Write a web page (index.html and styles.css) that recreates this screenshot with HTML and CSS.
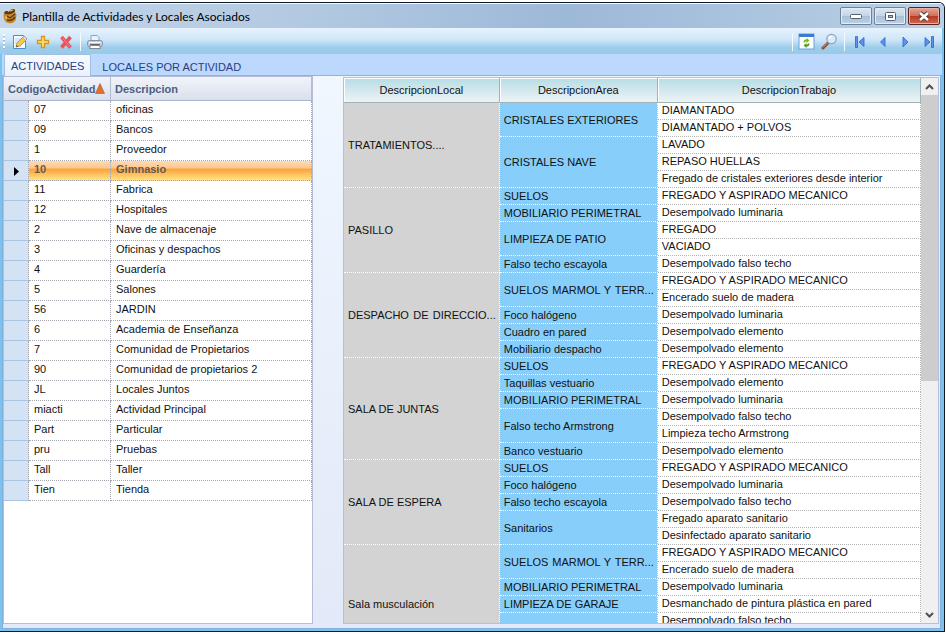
FILE: index.html
```html
<!DOCTYPE html>
<html lang="es">
<head>
<meta charset="utf-8">
<title>Plantilla de Actividades y Locales Asociados</title>
<link rel="stylesheet" href="styles.css">
</head>
<body>
<main class="window">
  <header class="titlebar">
    <svg class="app-icon" width="14" height="16" viewBox="0 0 14 16" aria-hidden="true">
      <path d="M1 5C0 9 1 14 5 15c4 1 8-1 8-5 1-3 0-5-1-6L8 6Z" fill="#c98427"/>
      <path d="M1 5C2 2 5 3 6 4 7 1 11 0 12 2c1 2-3 4-5 4S3 7 1 5Z" fill="#5b3a19"/>
      <path d="M4 8l3 2 5-4M4 12c3 1 6 0 8-3" stroke="#5f3b10" stroke-width="1.4" fill="none"/>
      <path d="M7 3l3-1M3 8v3" stroke="#ffd76b" fill="none"/>
    </svg>
    <h1 class="title">Plantilla de Actividades y Locales Asociados</h1>
    <div class="window-buttons">
      <button class="win-btn" aria-label="Minimizar"><svg width="12" height="5" viewBox="0 0 12 5"><rect x=".5" y=".5" width="11" height="4" rx="1" fill="#fff" stroke="#535f6d"/></svg></button>
      <button class="win-btn" aria-label="Maximizar"><svg width="11" height="9" viewBox="0 0 11 9"><rect x=".5" y=".5" width="10" height="8" rx="1" fill="#fff" stroke="#535f6d"/><rect x="3.500" y="3.500" width="4" height="2" fill="#a9bdd2" stroke="#535f6d"/></svg></button>
      <button class="win-btn close" aria-label="Cerrar"><svg width="14" height="11" viewBox="0 0 14 11"><path d="M3 2l8 7M11 2L3 9" stroke="#53393c" stroke-width="4.500"/><path d="M3 2l8 7M11 2L3 9" stroke="#fff" stroke-width="2.600"/></svg></button>
    </div>
  </header>

  <div class="toolbar">
    <span class="grip"></span>
    <button class="tool" aria-label="Editar"><svg width="16" height="16" viewBox="0 0 16 16"><path d="M1.500 1.500h10l2 2v11h-12Z" fill="#f4fbff" stroke="#4c8fce"/><path d="M3 5h7M3 7h6M3 9h4" stroke="#b5d5ee"/><path d="M4 13l1-4 7-7 3 3-7 7Z" fill="#f7c950" stroke="#bd8429" stroke-width=".8"/><path d="M12 2l3 3-1.500 1.500-3-3Z" fill="#d8e3f0" stroke="#88a" stroke-width=".6"/><path d="M4 13l.6-2 1.500 1.500Z" fill="#444"/></svg></button>
    <button class="tool" aria-label="Añadir"><svg width="16" height="16" viewBox="0 0 16 16"><path d="M6.500 2.500h3v4h4v3h-4v4h-3v-4h-4v-3h4Z" fill="#ffe07a" stroke="#d5961b" stroke-width="1.300"/></svg></button>
    <button class="tool" aria-label="Eliminar"><svg width="16" height="16" viewBox="0 0 16 16"><path d="M3.500 3l9 10.500M12.500 3l-9 10.500" stroke="#e9545a" stroke-width="3.600"/><path d="M4 3.500l8 9" stroke="#f68484" stroke-width="1"/></svg></button>
    <span class="separator"></span>
    <button class="tool" aria-label="Imprimir"><svg width="16" height="16" viewBox="0 0 16 16"><path d="M4 7V1.500h6l2 2V7" fill="#e7f3ff" stroke="#7aa7d8"/><rect x=".5" y="6.500" width="15" height="6" rx="2" fill="#c9ced6" stroke="#8a919c"/><path d="M2 8.500h12" stroke="#f5f6f8"/><path d="M3 10.500h10" stroke="#5e646e"/><path d="M3.500 11.500h9l1 3h-11Z" fill="#fff" stroke="#818895"/></svg></button>
    <span class="spring"></span>
    <span class="separator"></span>
    <button class="tool" aria-label="Actualizar"><svg width="17" height="17" viewBox="0 0 17 17"><rect x="1" y="1" width="15" height="15" fill="#fbfdff" stroke="#6fa0dc"/><path d="M1 1h15v3H1Z" fill="#3d7bd2"/><path d="M5.500 9.500C5.500 7 7 6.500 8.500 6.500V5l3 2.500-3 2.500V8.500C7.500 8.500 7 9 7 9.500Z" fill="#7cb82a"/><path d="M11.500 10.500c0 2.500-1.500 3-3 3V15l-3-2.500 3-2.500v1.500c1 0 1.500-.5 1.500-1Z" fill="#5a9c16"/></svg></button>
    <button class="tool" aria-label="Buscar"><svg width="17" height="17" viewBox="0 0 17 17"><path d="M7 10l-5 5" stroke="#8a4b33" stroke-width="3" stroke-linecap="round"/><path d="M6.500 10L2 14.500" stroke="#d99a73" stroke-width="1"/><circle cx="10.500" cy="6" r="4.700" fill="#d6ecfc" stroke="#8fa5bd" stroke-width="1.300"/><path d="M8 5.500q1-2 3-2" stroke="#fff" stroke-width="1.500" fill="none"/></svg></button>
    <span class="separator"></span>
    <button class="nav" aria-label="Primero"><svg width="12" height="12" viewBox="0 0 12 12"><path d="M1.500.5h2v11h-2ZM10 1.500v9L5 6Z" fill="#5f92ec" stroke="#2f62c8" stroke-width=".8"/></svg></button>
    <button class="nav" aria-label="Anterior"><svg width="12" height="12" viewBox="0 0 12 12"><path d="M8 1.500v9L3.500 6Z" fill="#5f92ec" stroke="#2f62c8" stroke-width=".8"/></svg></button>
    <button class="nav" aria-label="Siguiente"><svg width="12" height="12" viewBox="0 0 12 12"><path d="M3 1v10L8 6Z" fill="#5f92ec" stroke="#2f62c8" stroke-width=".8"/></svg></button>
    <button class="nav" aria-label="Último"><svg width="12" height="12" viewBox="0 0 12 12"><path d="M8.500.5h2v11h-2ZM2 1.500v9L7 6Z" fill="#5f92ec" stroke="#2f62c8" stroke-width=".8"/></svg></button>
  </div>

  <div class="tabs" role="tablist">
    <button class="tab active" role="tab" aria-selected="true">ACTIVIDADES</button>
    <button class="tab" role="tab" aria-selected="false">LOCALES POR ACTIVIDAD</button>
  </div>

  <section class="panel">
    <div class="activities">
      <table class="list">
        <colgroup><col class="c-mark"><col class="c-code"><col></colgroup>
        <thead><tr><th colspan="2"><span class="sorted">CodigoActividad<svg width="10" height="11" viewBox="0 0 10 11"><path d="M5 .5l4.500 10h-9Z" fill="#e2702a" stroke="#a9623c" stroke-width=".7"/></svg></span></th><th>Descripcion</th></tr></thead>
        <tbody>
          <tr><td></td><td>07</td><td>oficinas</td></tr>
          <tr><td></td><td>09</td><td>Bancos</td></tr>
          <tr><td></td><td>1</td><td>Proveedor</td></tr>
          <tr class="selected"><td><svg width="5" height="9" viewBox="0 0 5 9"><path d="M0 0l5 4.500L0 9Z"/></svg></td><td>10</td><td>Gimnasio</td></tr>
          <tr><td></td><td>11</td><td>Fabrica</td></tr>
          <tr><td></td><td>12</td><td>Hospitales</td></tr>
          <tr><td></td><td>2</td><td>Nave de almacenaje</td></tr>
          <tr><td></td><td>3</td><td>Oficinas y despachos</td></tr>
          <tr><td></td><td>4</td><td>Guardería</td></tr>
          <tr><td></td><td>5</td><td>Salones</td></tr>
          <tr><td></td><td>56</td><td>JARDIN</td></tr>
          <tr><td></td><td>6</td><td>Academia de Enseñanza</td></tr>
          <tr><td></td><td>7</td><td>Comunidad de Propietarios</td></tr>
          <tr><td></td><td>90</td><td>Comunidad de propietarios 2</td></tr>
          <tr><td></td><td>JL</td><td>Locales Juntos</td></tr>
          <tr><td></td><td>miacti</td><td>Actividad Principal</td></tr>
          <tr><td></td><td>Part</td><td>Particular</td></tr>
          <tr><td></td><td>pru</td><td>Pruebas</td></tr>
          <tr><td></td><td>Tall</td><td>Taller</td></tr>
          <tr><td></td><td>Tien</td><td>Tienda</td></tr>
        </tbody>
      </table>
    </div>

    <div class="works">
      <div class="works-view">
        <table class="tree">
          <colgroup><col class="c-local"><col class="c-area"><col></colgroup>
          <thead><tr><th>DescripcionLocal</th><th>DescripcionArea</th><th>DescripcionTrabajo</th></tr></thead>
          <tbody>
            <tr><td class="local" rowspan="5">TRATAMIENTOS....</td><td class="area" rowspan="2">CRISTALES EXTERIORES</td><td>DIAMANTADO</td></tr>
            <tr><td>DIAMANTADO + POLVOS</td></tr>
            <tr><td class="area" rowspan="3">CRISTALES NAVE</td><td>LAVADO</td></tr>
            <tr><td>REPASO HUELLAS</td></tr>
            <tr><td>Fregado de cristales exteriores desde interior</td></tr>
            <tr><td class="local" rowspan="5">PASILLO</td><td class="area">SUELOS</td><td>FREGADO Y ASPIRADO MECANICO</td></tr>
            <tr><td class="area">MOBILIARIO PERIMETRAL</td><td>Desempolvado luminaria</td></tr>
            <tr><td class="area" rowspan="2">LIMPIEZA DE PATIO</td><td>FREGADO</td></tr>
            <tr><td>VACIADO</td></tr>
            <tr><td class="area">Falso techo escayola</td><td>Desempolvado falso techo</td></tr>
            <tr><td class="local full" rowspan="5">DESPACHO DE DIRECCIO...</td><td class="area full" rowspan="2">SUELOS MARMOL Y TERR...</td><td>FREGADO Y ASPIRADO MECANICO</td></tr>
            <tr><td>Encerado suelo de madera</td></tr>
            <tr><td class="area">Foco halógeno</td><td>Desempolvado luminaria</td></tr>
            <tr><td class="area">Cuadro en pared</td><td>Desempolvado elemento</td></tr>
            <tr><td class="area">Mobiliario despacho</td><td>Desempolvado elemento</td></tr>
            <tr><td class="local" rowspan="6">SALA DE JUNTAS</td><td class="area">SUELOS</td><td>FREGADO Y ASPIRADO MECANICO</td></tr>
            <tr><td class="area">Taquillas vestuario</td><td>Desempolvado elemento</td></tr>
            <tr><td class="area">MOBILIARIO PERIMETRAL</td><td>Desempolvado luminaria</td></tr>
            <tr><td class="area" rowspan="2">Falso techo Armstrong</td><td>Desempolvado falso techo</td></tr>
            <tr><td>Limpieza techo Armstrong</td></tr>
            <tr><td class="area">Banco vestuario</td><td>Desempolvado elemento</td></tr>
            <tr><td class="local" rowspan="5">SALA DE ESPERA</td><td class="area">SUELOS</td><td>FREGADO Y ASPIRADO MECANICO</td></tr>
            <tr><td class="area">Foco halógeno</td><td>Desempolvado luminaria</td></tr>
            <tr><td class="area">Falso techo escayola</td><td>Desempolvado falso techo</td></tr>
            <tr><td class="area" rowspan="2">Sanitarios</td><td>Fregado aparato sanitario</td></tr>
            <tr><td>Desinfectado aparato sanitario</td></tr>
            <tr><td class="local" rowspan="7">Sala musculación</td><td class="area full" rowspan="2">SUELOS MARMOL Y TERR...</td><td>FREGADO Y ASPIRADO MECANICO</td></tr>
            <tr><td>Encerado suelo de madera</td></tr>
            <tr><td class="area">MOBILIARIO PERIMETRAL</td><td>Desempolvado luminaria</td></tr>
            <tr><td class="area">LIMPIEZA DE GARAJE</td><td>Desmanchado de pintura plástica en pared</td></tr>
            <tr><td class="area" rowspan="3"></td><td>Desempolvado falso techo</td></tr>
            <tr><td></td></tr>
            <tr><td></td></tr>
          </tbody>
        </table>
      </div>
      <div class="scrollbar">
        <button class="scroll-btn" aria-label="Subir"><svg width="9" height="6" viewBox="0 0 9 6"><path d="M1 5l3.500-3.500L8 5" fill="none" stroke="#505050" stroke-width="2"/></svg></button>
        <div class="track"><div class="thumb"></div></div>
        <button class="scroll-btn" aria-label="Bajar"><svg width="9" height="6" viewBox="0 0 9 6"><path d="M1 1l3.500 3.500L8 1" fill="none" stroke="#505050" stroke-width="2"/></svg></button>
      </div>
    </div>
  </section>
</main>
</body>
</html>
```
FILE: styles.css
```css
* { box-sizing: border-box; }
body {
  margin: 0;
  background: #fff;
  font: 11px/16px "Liberation Sans", Arial, sans-serif;
  color: #111;
}
button { border: 0; padding: 0; background: none; font: inherit; color: inherit; }
svg { display: block; flex: none; }

.window {
  display: flex;
  flex-direction: column;
  height: calc(100vh - 4px);
  margin: 2px 1px 2px 0;
  border: 1px solid #101820;
  border-left: 0;
  border-radius: 0 6px 0 0;
  background: #78c4ee;
  overflow: hidden;
}

.titlebar {
  display: flex;
  align-items: center;
  flex: none;
  height: 25px;
  padding: 0 4px 0 3px;
  gap: 5px;
  border-top: 1px solid #f4f8fc;
  background: linear-gradient(90deg, #c3d6ea 0, #b4cae2 30%, #9db9d8 60%, #b9cfe5 100%);
}
.title { flex: 1; margin: 0; padding-top: 2px; font: 12px/18px Lato, "Open Sans", sans-serif; color: #000; }
.window-buttons { display: flex; gap: 2px; }
.win-btn {
  display: flex;
  align-items: center;
  justify-content: center;
  width: 32px;
  height: 18px;
  border: 1px solid #6f8299;
  border-radius: 2px;
  background: linear-gradient(#dbe7f3 0, #c5d6e8 48%, #a8bfd8 52%, #bfd2e6 100%);
  box-shadow: inset 0 0 0 1px #e3edf7;
}
.win-btn.close {
  border-color: #5a2320;
  background: linear-gradient(#e4a597 0, #d2705c 48%, #b93a22 52%, #d0694e 100%);
  box-shadow: inset 0 0 0 1px #e8b3a6;
}

.toolbar {
  display: flex;
  align-items: center;
  flex: none;
  height: 26px;
  margin-right: 2px;
  padding: 1px 2px 0 3px;
  background: linear-gradient(#e6f3fd 0, #cfe6f9 45%, #9ccdeb 75%, #99cbe9 100%);
}
.grip { width: 2px; height: 16px; margin-right: 3px; background: repeating-linear-gradient(#fff 0 2px, #9bb7d3 2px 3px, transparent 3px 4px); }
.tool, .nav { display: flex; align-items: center; justify-content: center; width: 23px; height: 22px; }
.separator { width: 1px; height: 18px; margin: 0 3px; background: #f4fbff; }
.separator + .tool { margin-left: -1px; }
.spring { flex: 1; }

.tabs {
  display: flex;
  flex: none;
  height: 22px;
  margin: 0 2px;
  padding-left: 2px;
  background: #bcd8fd;
  border-bottom: 1px solid #93b1dc;
  color: #263f86;
}
.tab { height: 21px; padding: 4px 14px 0 11px; }
.tab.active {
  height: 22px;
  padding: 2px 6px 1px;
  border: 1px solid #a0bfe6;
  border-bottom: 0;
  border-radius: 2px 2px 0 0;
  background: linear-gradient(#f8fbff, #e9f2fd);
}

.panel {
  display: grid;
  grid-template-columns: 310px minmax(0, 1fr);
  gap: 30px;
  flex: 1;
  min-height: 0;
  margin: 0 3px 2px 2px;
  padding: 0 1px 4px 0;
  border: 1px solid #86b0dc;
  border-top: 0;
  background: linear-gradient(#f1f7ff, #e2e9f8);
}
table { width: 100%; table-layout: fixed; border-collapse: separate; border-spacing: 0; }
td, th { overflow: hidden; white-space: nowrap; text-align: left; }

.activities { border: 1px solid #b3bcd8; background: #fff; overflow: hidden; }
.c-mark { width: 25px; }
.c-code { width: 82px; }
.list th {
  height: 24px;
  padding: 0 4px;
  border-right: 1px solid #b3bcd2;
  border-bottom: 1px solid #aab4cc;
  background: linear-gradient(#f1f4f9, #d9e0ed);
  color: #4b5f80;
}
.sorted { display: flex; align-items: center; }
.list td {
  height: 20px;
  padding: 0 5px 3px;
  line-height: 16px;
  border-right: 1px dotted #a5a5ad;
  border-bottom: 1px dotted #a5a5ad;
}
.list td:first-child { padding: 2px 0 0 10px; background: #d3e3f3; border-bottom: 1px solid #a9c5e2; }
.list .selected td:not(:first-child) {
  background: linear-gradient(#fddcb4 0, #fdc88c 35%, #fba43c 45%, #fec765 75%, #ffe27e 100%);
  color: #655a52;
  font-weight: bold;
}

.works {
  display: grid;
  grid-template-columns: minmax(0, 1fr) 17px;
  min-height: 0;
  margin-top: 1px;
  border: 1px solid #b3c0dc;
  background: #fff;
}
.works-view { min-height: 0; overflow: hidden; }
.c-local { width: 27%; }
.c-area { width: 158px; }
.tree { line-height: 14px; }
.tree th {
  height: 25px;
  padding: 0;
  border: 1px solid #9fb3b8;
  border-width: 0 1px 1px 0;
  box-shadow: inset 1px 1px 0 #fff;
  background: linear-gradient(#b6dce6, #eef3f4);
  font-weight: normal;
  text-align: center;
}
.tree td {
  height: 17px;
  padding: 0 3px 2px 4px;
  border-right: 1px dotted #b5b5b5;
  border-bottom: 1px dotted #b5b5b5;
}
.tree .local { background: #d3d3d3; border-color: #fff; }
.tree .area { background: #87cefa; border-color: #fff; }
.tree .area, .tree .local { padding-bottom: 0; }
.tree .full { text-align: justify; text-align-last: justify; }

.scrollbar { display: flex; flex-direction: column; background: #f0f0f0; }
.scroll-btn { display: flex; align-items: center; justify-content: center; flex: none; height: 17px; }
.track { flex: 1; }
.thumb { height: 56%; background: #cdcdcd; }
```
